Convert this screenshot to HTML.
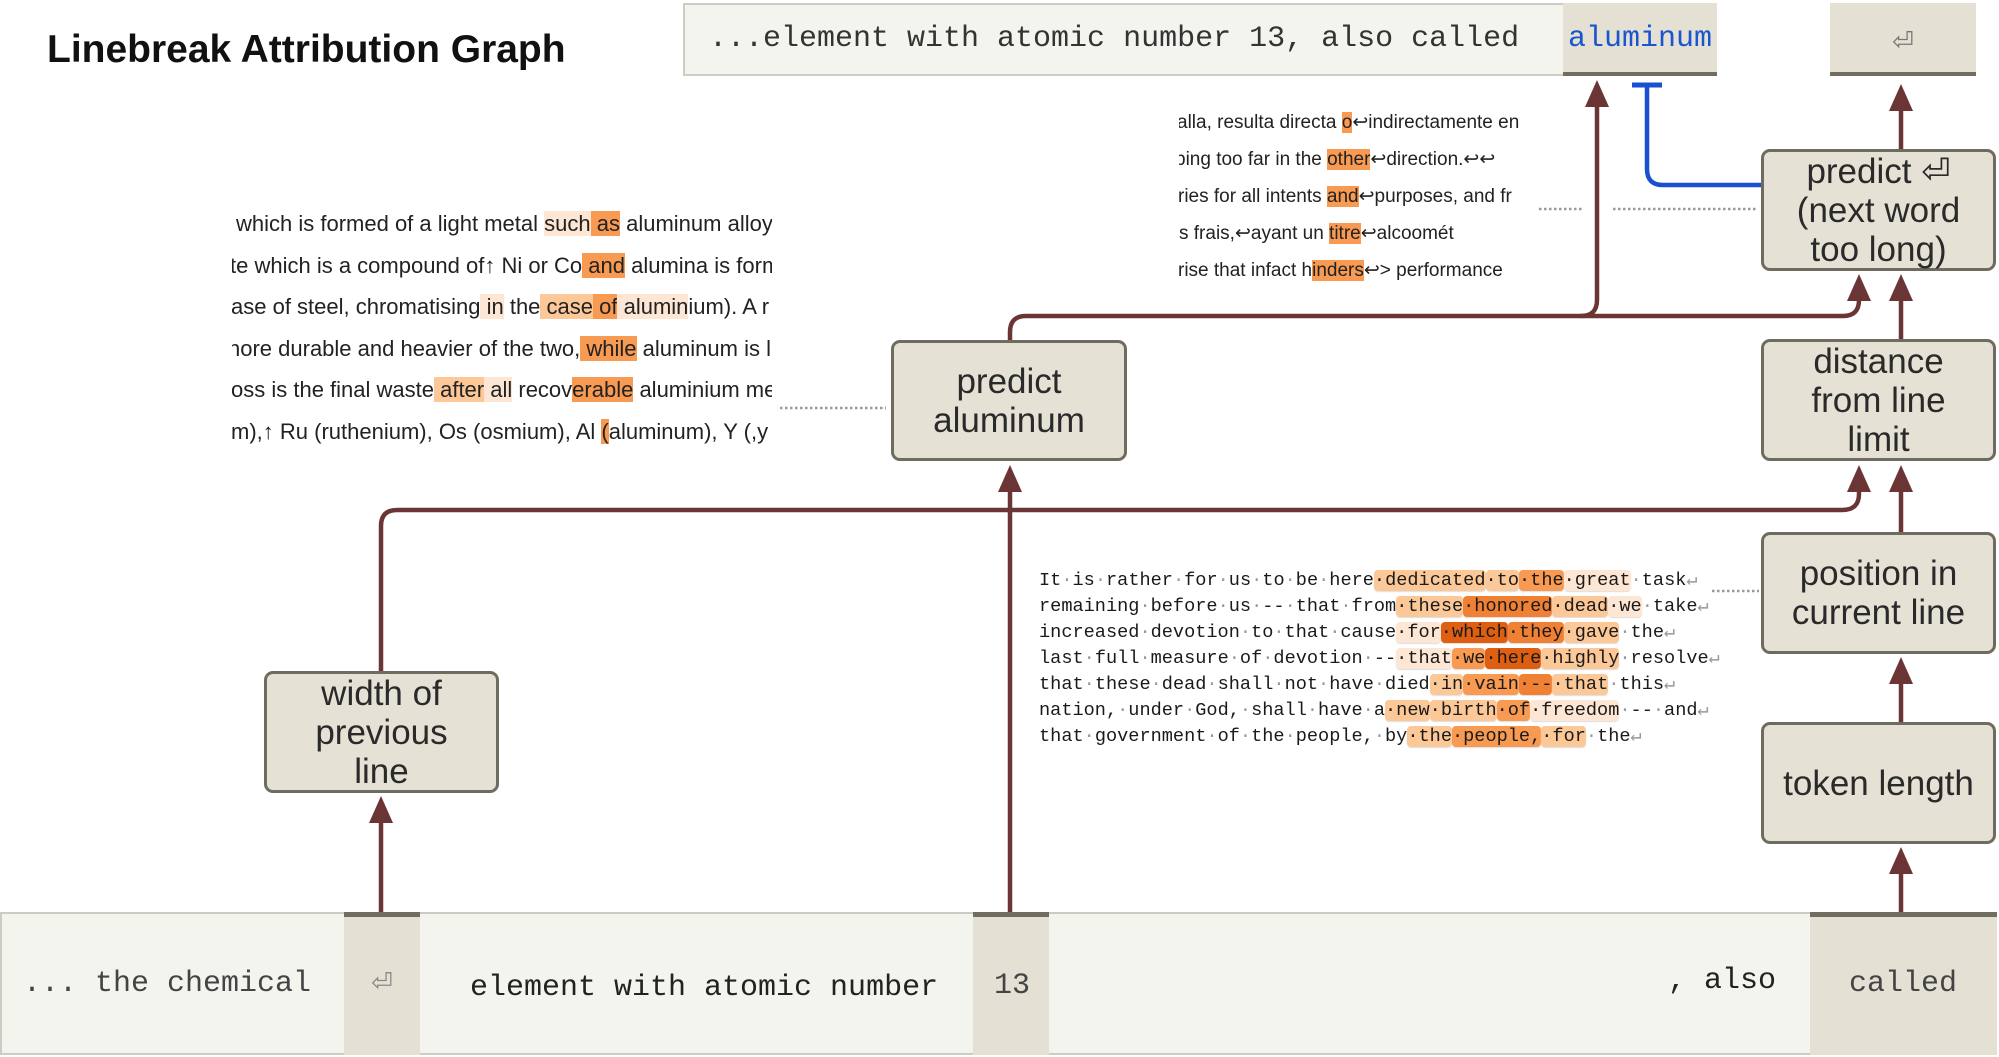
<!DOCTYPE html>
<html><head><meta charset="utf-8"><style>
*{margin:0;padding:0;box-sizing:border-box}
body{width:1999px;height:1057px;background:#fff;position:relative;overflow:hidden;font-family:"Liberation Sans",sans-serif;color:#222}
.abs{position:absolute}
.title{left:47px;top:28px;font-size:39px;font-weight:bold;letter-spacing:0px;color:#111}
.node{position:absolute;background:#e5e1d5;border:3px solid #6e6c5e;border-radius:9px;display:flex;align-items:center;justify-content:center;text-align:center;font-size:35px;line-height:39px;color:#2a2a2a}
.mono{font-family:"Liberation Mono",monospace}
.snip{position:absolute;overflow:hidden;white-space:nowrap;font-size:22px;color:#222}
.snip div{position:absolute;height:28px;line-height:28px}
.h1{background:#fde6d3}.h2{background:#fcc898}.h3{background:#f89a52}.h4{background:#f08033}.h5{background:#de5f12}
.g{position:absolute;left:1039px;top:568px;font-size:18.6px;line-height:26px;white-space:pre;color:#1a1a1a}
.g .d{color:#999}
.g span.t{border-radius:4px;box-shadow:0 1px 1px #ddd}
</style></head><body>
<div class="abs title">Linebreak Attribution Graph</div>

<div class="abs" style="left:683px;top:3px;width:1034px;height:73px;background:#f4f4ef;border:2px solid #ccccc4"></div>
<div class="abs" style="left:1563px;top:3px;width:154px;height:73px;background:#e4e0d4;border-bottom:4px solid #706e60"></div>
<div class="abs mono" style="left:709px;top:22px;font-size:30px;color:#333;white-space:pre">...element with atomic number 13, also called</div>
<div class="abs mono" style="left:1568px;top:22px;font-size:30px;color:#1a55d0">aluminum</div>
<div class="abs" style="left:1830px;top:3px;width:146px;height:73px;background:#e4e0d4;border-bottom:4px solid #706e60;text-align:center;line-height:76px;font-size:26px;color:#777">⏎</div>

<div class="abs" style="left:0;top:912px;width:1997px;height:143px;background:#f4f4ef;border:2px solid #ccccc4"></div>
<div class="abs" style="left:344px;top:912px;width:76px;height:143px;background:#e4e0d4;border-top:5px solid #706e60"></div>
<div class="abs" style="left:973px;top:912px;width:76px;height:143px;background:#e4e0d4;border-top:5px solid #706e60"></div>
<div class="abs" style="left:1810px;top:912px;width:187px;height:143px;background:#e4e0d4;border-top:5px solid #706e60"></div>
<div class="abs mono" style="left:23px;top:967px;font-size:30px;color:#444;white-space:pre">... the chemical</div>
<div class="abs" style="left:344px;top:967px;width:76px;text-align:center;font-size:26px;color:#888">⏎</div>
<div class="abs mono" style="left:470px;top:971px;font-size:30px;color:#222;white-space:pre">element with atomic number</div>
<div class="abs mono" style="left:994px;top:969px;font-size:30px;color:#444">13</div>
<div class="abs mono" style="left:1668px;top:964px;font-size:30px;color:#222;white-space:pre">, also</div>
<div class="abs mono" style="left:1849px;top:967px;font-size:30px;color:#444">called</div>

<svg class="abs" style="left:0;top:0" width="1999" height="1057">
<g fill="none" stroke="#6b3535" stroke-width="4.5">
<path d="M381 912 V820"/>
<path d="M381 671 V526 Q381 510 397 510 H1842 Q1859 510 1859 494 V490"/>
<path d="M1010 912 V490"/>
<path d="M1010 340 V332 Q1010 316 1026 316 H1581 Q1597 316 1597 300 V104"/>
<path d="M1581 316 H1843 Q1859 316 1859 300 V298"/>
<path d="M1901 912 V870 M1901 722 V680 M1901 532 V490 M1901 339 V298 M1901 149 V108"/>
</g>
<g fill="#6b3535">
<polygon points="381,796 369,823 393,823"/>
<polygon points="1010,465 998,492 1022,492"/>
<polygon points="1859,465 1847,492 1871,492"/>
<polygon points="1901,465 1889,492 1913,492"/>
<polygon points="1901,847 1889,874 1913,874"/>
<polygon points="1901,657 1889,684 1913,684"/>
<polygon points="1901,274 1889,301 1913,301"/>
<polygon points="1859,274 1847,301 1871,301"/>
<polygon points="1597,80 1585,107 1609,107"/>
<polygon points="1901,84 1889,111 1913,111"/>
</g>
<path d="M1761 185 H1663 Q1647 185 1647 169 V86" fill="none" stroke="#1a4fd0" stroke-width="4.5"/>
<path d="M1632 85 H1662" stroke="#1a4fd0" stroke-width="5"/>
<g stroke="#999" stroke-width="2.5" stroke-dasharray="2.5 2.5">
<path d="M1539 209 H1583 M1613 209 H1757"/>
<path d="M780 408 H886"/>
<path d="M1712 591 H1759"/>
</g>
</svg>

<div class="node" style="left:891px;top:340px;width:236px;height:121px">predict<br>aluminum</div>
<div class="node" style="left:1761px;top:149px;width:235px;height:122px">predict ⏎<br>(next word<br>too long)</div>
<div class="node" style="left:1761px;top:339px;width:235px;height:122px">distance<br>from line<br>limit</div>
<div class="node" style="left:1761px;top:532px;width:235px;height:122px">position in<br>current line</div>
<div class="node" style="left:1761px;top:722px;width:235px;height:122px">token length</div>
<div class="node" style="left:264px;top:671px;width:235px;height:122px">width of<br>previous<br>line</div>

<div class="snip" style="left:232px;top:200px;width:540px;height:250px">
<div style="left:4px;top:10px">which is formed of a light metal <span class="h1">such</span><span class="h3"> as</span> aluminum alloy<span class="h1"> </span></div>
<div style="left:-2px;top:52px">te which is a compound of↑ Ni or Co<span class="h3"> and</span> alumina is formed</div>
<div style="left:-1px;top:93px">ase of steel, chromatising<span class="h1"> in</span> the<span class="h2"> case</span><span class="h3"> of</span><span class="h1"> alumin</span>ium). A r</div>
<div style="left:-4px;top:135px">nore durable and heavier of the two,<span class="h3"> while</span> aluminum is li</div>
<div style="left:-1px;top:176px">oss is the final waste<span class="h2"> after</span><span class="h1"> all</span> recov<span class="h3">erable</span> aluminium met</div>
<div style="left:-1px;top:218px">m),↑ Ru (ruthenium), Os (osmium), Al <span class="h3">(</span>aluminum), Y (,y</div>
</div>

<div class="snip" style="left:1179px;top:107px;width:357px;height:180px;font-size:19px">
<div style="left:-2px;top:2px">alla, resulta directa <span class="h3">o</span>↩indirectamente en</div>
<div style="left:-4px;top:39px">ping too far in the <span class="h3">other</span>↩direction.↩↩</div>
<div style="left:-1px;top:76px">ries for all intents <span class="h3">and</span>↩purposes, and fr</div>
<div style="left:0px;top:113px">s frais,↩ayant un <span class="h3">titre</span>↩alcoomét</div>
<div style="left:-1px;top:150px">rise that infact h<span class="h3">inders</span>↩&gt; performance</div>
</div>

<div class="g mono">It<span class="d">·</span>is<span class="d">·</span>rather<span class="d">·</span>for<span class="d">·</span>us<span class="d">·</span>to<span class="d">·</span>be<span class="d">·</span>here<span class="h2 t">·dedicated</span><span class="h2 t">·to</span><span class="h3 t">·the</span><span class="h1 t">·great</span><span class="d">·</span>task<span class="d">↵</span>
remaining<span class="d">·</span>before<span class="d">·</span>us<span class="d">·</span>--<span class="d">·</span>that<span class="d">·</span>from<span class="h2 t">·these</span><span class="h4 t">·honored</span><span class="h2 t">·dead</span><span class="h1 t">·we</span><span class="d">·</span>take<span class="d">↵</span>
increased<span class="d">·</span>devotion<span class="d">·</span>to<span class="d">·</span>that<span class="d">·</span>cause<span class="h1 t">·for</span><span class="h5 t">·which</span><span class="h4 t">·they</span><span class="h2 t">·gave</span><span class="d">·</span>the<span class="d">↵</span>
last<span class="d">·</span>full<span class="d">·</span>measure<span class="d">·</span>of<span class="d">·</span>devotion<span class="d">·</span>--<span class="h1 t">·that</span><span class="h3 t">·we</span><span class="h5 t">·here</span><span class="h2 t">·highly</span><span class="d">·</span>resolve<span class="d">↵</span>
that<span class="d">·</span>these<span class="d">·</span>dead<span class="d">·</span>shall<span class="d">·</span>not<span class="d">·</span>have<span class="d">·</span>died<span class="h2 t">·in</span><span class="h3 t">·vain</span><span class="h4 t">·--</span><span class="h2 t">·that</span><span class="d">·</span>this<span class="d">↵</span>
nation,<span class="d">·</span>under<span class="d">·</span>God,<span class="d">·</span>shall<span class="d">·</span>have<span class="d">·</span>a<span class="h2 t">·new</span><span class="h2 t">·birth</span><span class="h3 t">·of</span><span class="h1 t">·freedom</span><span class="d">·</span>--<span class="d">·</span>and<span class="d">↵</span>
that<span class="d">·</span>government<span class="d">·</span>of<span class="d">·</span>the<span class="d">·</span>people,<span class="d">·</span>by<span class="h2 t">·the</span><span class="h3 t">·people,</span><span class="h2 t">·for</span><span class="d">·</span>the<span class="d">↵</span></div>
</body></html>
